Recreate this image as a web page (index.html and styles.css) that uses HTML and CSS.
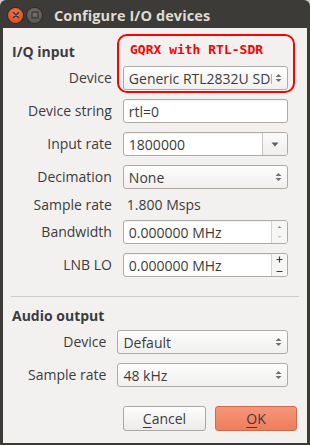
FILE: index.html
```html
<!DOCTYPE html>
<html lang="en">
<head>
<meta charset="UTF-8">
<title>Configure I/O devices</title>
<link rel="stylesheet" href="styles.css">
</head>
<body>
  <div class="window">
    <div class="titlebar">
      <span class="wbtn close">
        <svg width="16" height="16" viewBox="0 0 16 16"><path d="M5.5 5.5 L10.5 10.5 M10.5 5.5 L5.5 10.5" stroke="#3c3b37" stroke-width="1.6" stroke-linecap="round"/></svg>
      </span>
      <span class="wbtn max">
        <svg width="16" height="16" viewBox="0 0 16 16"><rect x="5" y="5" width="6" height="6" rx="0.5" fill="none" stroke="#3c3b37" stroke-width="1.4"/></svg>
      </span>
      <span class="title">Configure I/O devices</span>
    </div>

    <div class="content">
      <!-- annotation drawn on top of the dialog -->
      <div class="note">GQRX with RTL-SDR</div>

      <h2 class="section">I/Q input</h2>
      <div class="form">
        <label>Device</label>
        <div class="combo">
          <span class="value">Generic RTL2832U SDR</span>
          <svg class="updown" width="7" height="12" viewBox="0 0 7 12"><path d="M0.5 5 L3.5 2 L6.5 5 Z M0.5 7 L3.5 10 L6.5 7 Z" fill="#707070"/></svg>
        </div>

        <label>Device string</label>
        <div class="entry"><span class="value">rtl=0</span></div>

        <label>Input rate</label>
        <div class="entry combo-entry">
          <span class="value">1800000</span>
          <span class="drop"><svg width="8" height="5" viewBox="0 0 8 5"><path d="M0.5 0.5 L7.5 0.5 L4 4.5 Z" fill="#5e5e5e"/></svg></span>
        </div>

        <label>Decimation</label>
        <div class="combo">
          <span class="value">None</span>
          <svg class="updown" width="7" height="12" viewBox="0 0 7 12"><path d="M0.5 5 L3.5 2 L6.5 5 Z M0.5 7 L3.5 10 L6.5 7 Z" fill="#707070"/></svg>
        </div>

        <label class="short">Sample rate</label>
        <span class="plain">1.800 Msps</span>

        <label>Bandwidth</label>
        <div class="entry spin">
          <span class="value">0.000000 MHz</span>
          <span class="spin-btns">
            <svg width="15" height="22" viewBox="0 0 15 22"><path d="M5.5 7 L7.5 5 L9.5 7 Z" fill="#8a8a8a"/><path d="M5.5 15 L7.5 17 L9.5 15 Z" fill="#c4c4c4"/></svg>
          </span>
        </div>

        <label>LNB LO</label>
        <div class="entry spin">
          <span class="value">0.000000 MHz</span>
          <span class="spin-btns">
            <svg width="15" height="22" viewBox="0 0 15 22"><path d="M4.5 5.5 H10.5 M7.5 2.5 V8.5 M4.5 17.5 H10.5" stroke="#3c3c3c" stroke-width="1.2"/></svg>
          </span>
        </div>
      </div>

      <hr class="sep">

      <h2 class="section">Audio output</h2>
      <div class="form">
        <label>Device</label>
        <div class="combo">
          <span class="value">Default</span>
          <svg class="updown" width="7" height="12" viewBox="0 0 7 12"><path d="M0.5 5 L3.5 2 L6.5 5 Z M0.5 7 L3.5 10 L6.5 7 Z" fill="#707070"/></svg>
        </div>

        <label>Sample rate</label>
        <div class="combo">
          <span class="value">48 kHz</span>
          <svg class="updown" width="7" height="12" viewBox="0 0 7 12"><path d="M0.5 5 L3.5 2 L6.5 5 Z M0.5 7 L3.5 10 L6.5 7 Z" fill="#707070"/></svg>
        </div>
      </div>

      <div class="buttons">
        <button class="btn"><u>C</u>ancel</button>
        <button class="btn ok"><u>O</u>K</button>
      </div>
    </div>
  </div>
</body>
</html>
```

FILE: styles.css
```css
html, body {
  margin: 0;
  padding: 0;
}

body {
  background: #cfcdc9;
  font-family: "Open Sans", "Noto Sans", sans-serif;
  font-size: 14px;
  color: #3c3c3c;
}

.window {
  position: relative;
  width: 310px;
  height: 445px;
  box-sizing: border-box;
  background: #3c3b37;
  border-radius: 6px 6px 0 0;
  padding: 0 3px 2px 3px;
  display: flex;
  flex-direction: column;
}

/* title bar */
.titlebar {
  height: 28px;
  flex: none;
  display: flex;
  align-items: center;
  padding-left: 5px;
  padding-top: 2px;
  box-sizing: border-box;
}

.wbtn {
  width: 15px;
  height: 15px;
  border-radius: 50%;
  display: flex;
  align-items: center;
  justify-content: center;
  margin-right: 4px;
}

.wbtn svg {
  flex: none;
}

.close {
  background: radial-gradient(circle at 50% 35%, #f5774a, #dd5223 70%, #c4441a);
  box-shadow: 0 0 0 1px #2e2d2a;
}

.max {
  background: radial-gradient(circle at 50% 35%, #74726d, #5b5955 70%, #4f4d49);
  box-shadow: 0 0 0 1px #2e2d2a;
}

.title {
  margin-left: 8px;
  font-weight: 700;
  font-size: 14.5px;
  color: #dfdbd2;
  letter-spacing: 0.1px;
}

/* dialog body */
.content {
  flex: 1;
  background: #f2f1f0;
  padding: 15px 19px 0 9px;
}

.section {
  margin: 0 0 6px 0;
  font-size: 14px;
  line-height: 17px;
  font-weight: 700;
  color: #3c3c3c;
}

.form {
  display: grid;
  grid-template-columns: auto 1fr;
  column-gap: 11px;
  row-gap: 9px;
  margin-left: 16px;
  margin-bottom: 19px;
}

.form label {
  text-align: right;
  line-height: 24px;
  white-space: nowrap;
}

.form label.short,
.plain {
  line-height: 13px;
}

.plain {
  padding-left: 4px;
}

.entry,
.combo {
  height: 24px;
  box-sizing: border-box;
  border: 1px solid #aeaba6;
  border-radius: 3px;
  display: flex;
  align-items: center;
  overflow: hidden;
}

.entry {
  background: #fff;
  box-shadow: inset 0 1px 1px rgba(0, 0, 0, 0.06);
}

.combo {
  background: linear-gradient(#fdfdfd, #f1f0ef);
}

.value {
  flex: 1;
  padding-left: 5px;
  white-space: nowrap;
  overflow: hidden;
}

.updown {
  flex: none;
  margin: 0 5px 0 3px;
}

.combo-entry .drop {
  flex: none;
  width: 24px;
  height: 100%;
  border-left: 1px solid #c9c7c3;
  background: linear-gradient(#fbfbfb, #efeeed);
  display: flex;
  align-items: center;
  justify-content: center;
}

.spin-btns {
  flex: none;
  width: 15px;
  height: 100%;
  border-left: 1px solid #d3d1cd;
  background: #f6f6f5;
  display: flex;
  align-items: center;
}

.sep {
  border: 0;
  border-top: 1px solid #cdcbc8;
  margin: 0 -11px 10px -1px;
}

.buttons {
  display: flex;
  justify-content: flex-end;
  gap: 9px;
  margin-right: -9px;
}

.btn {
  width: 83px;
  height: 25px;
  font-family: inherit;
  font-size: 14px;
  color: #3c3c3c;
  border: 1px solid #aaa8a4;
  border-radius: 3px;
  background: linear-gradient(#fdfdfd, #ecebea);
  padding: 0;
}

.btn u {
  text-decoration-thickness: 1px;
  text-underline-offset: 3px;
}

.ok {
  width: 82px;
  background: linear-gradient(#f7957a, #ee7d5c);
  border-color: #cf6b4b;
}

/* red annotation */
.note {
  position: absolute;
  left: 117px;
  top: 34px;
  width: 178px;
  height: 59px;
  box-sizing: border-box;
  border: 2px solid #ff0000;
  border-radius: 10px;
  padding: 6px 0 0 11px;
  font-family: "DejaVu Sans Mono", "Liberation Mono", monospace;
  font-weight: 700;
  font-size: 13px;
  line-height: 16px;
  color: #ff0000;
}
```
